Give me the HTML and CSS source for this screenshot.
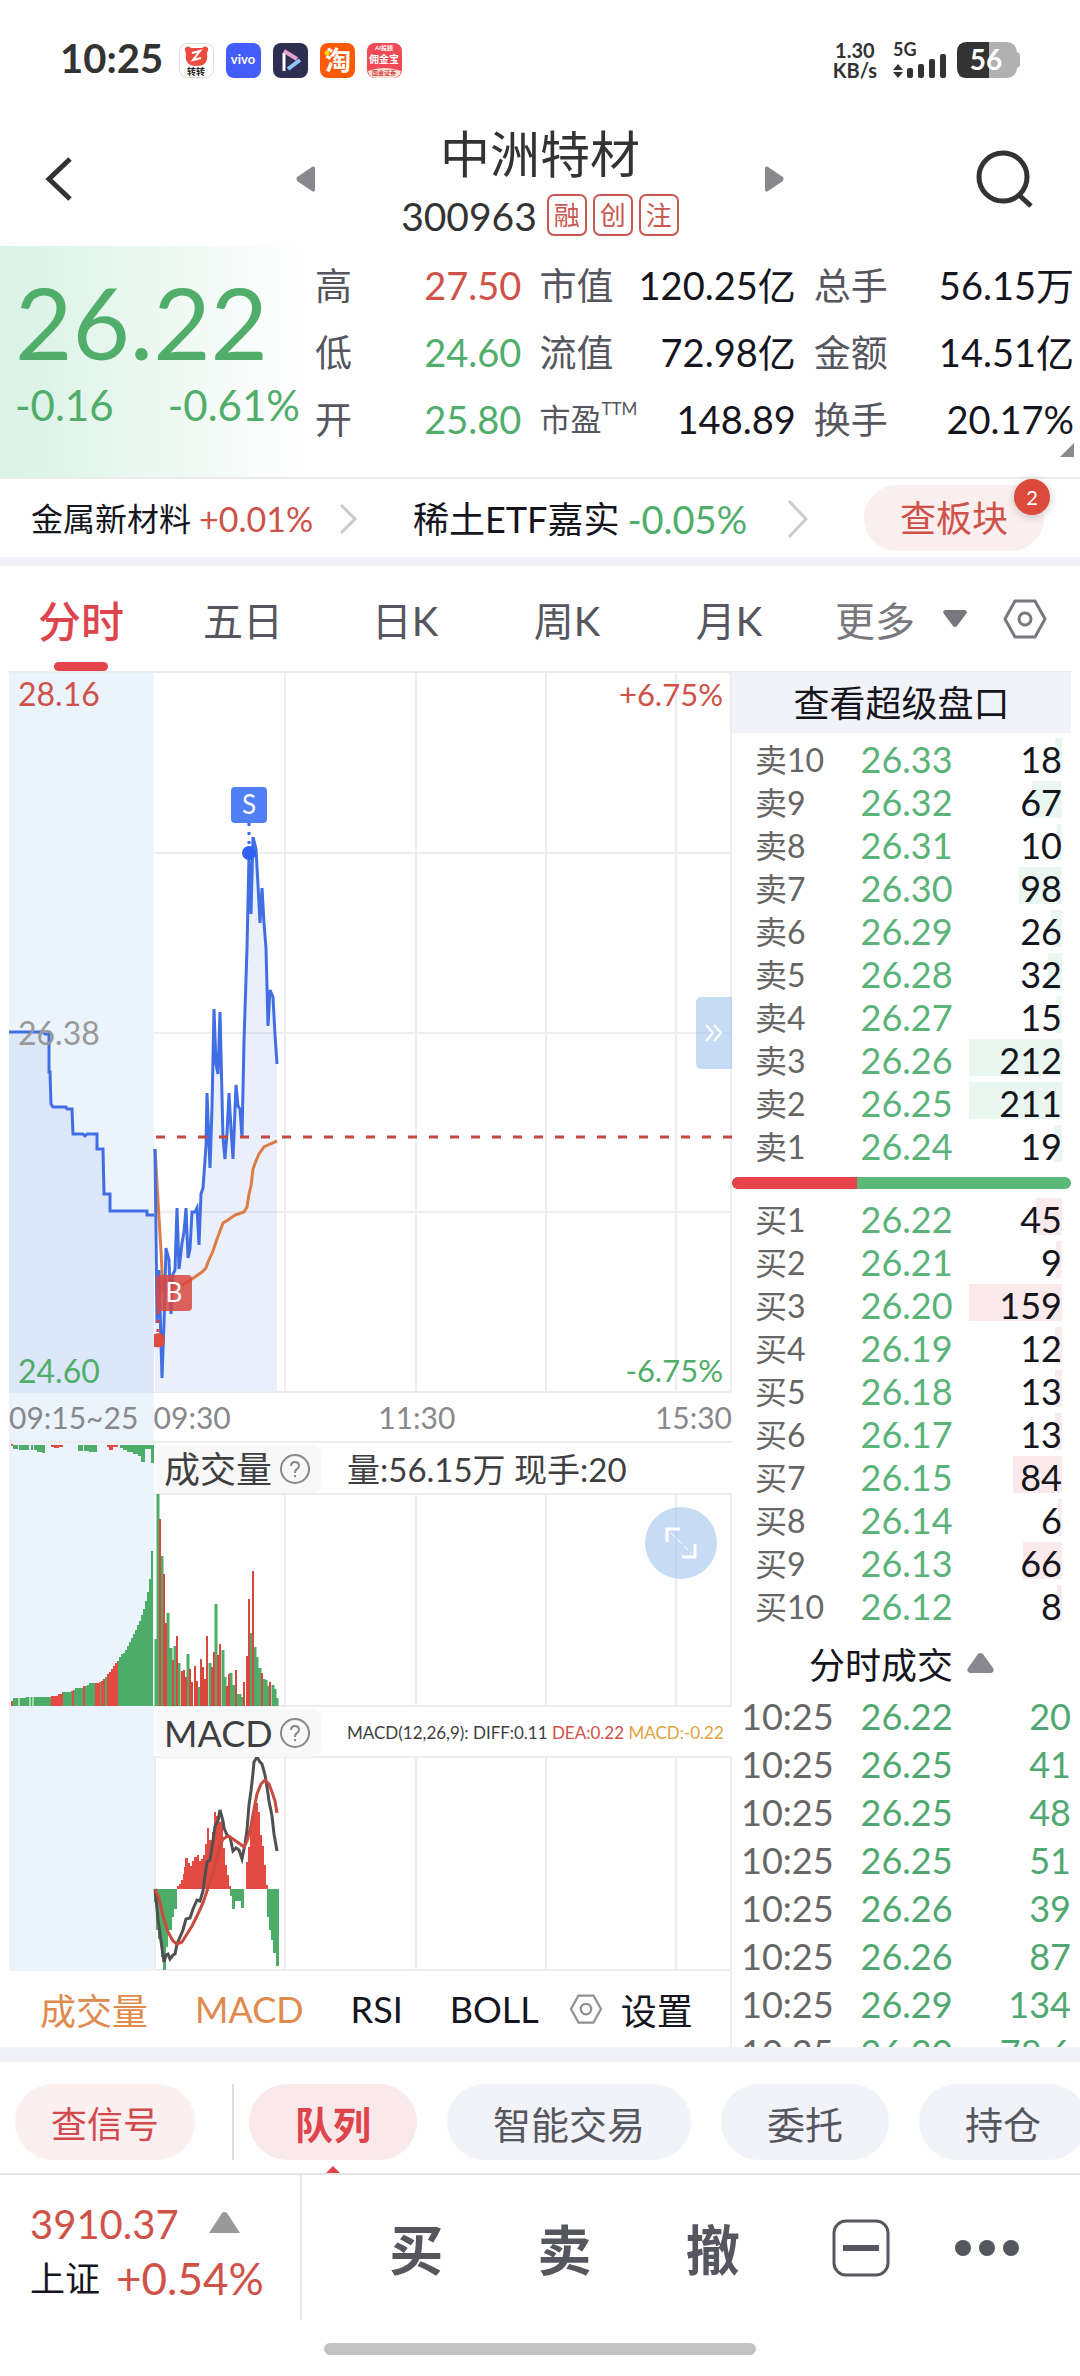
FILE: index.html
```html
<!DOCTYPE html>
<html lang="zh-CN">
<head>
    <meta charset="UTF-8">
    <meta name="viewport" content="width=device-width, initial-scale=1.0">
    <title>中洲特材 300963</title>
    <link rel="stylesheet" href="styles.css">
</head>
<body>
    <div class="status-bar">
        <span class="clock">10:25</span>
        <div class="app-icons">
            <svg width="35" height="35" viewBox="0 0 35 35">
                <rect x="0.5" y="0.5" width="34" height="34" rx="8" fill="#fff" stroke="#ddd"/>
                <path d="M6 5q3-3 6 0h11q3-3 6 0 1 2-1 5 2 13-10.500 13T7 10Q5 7 6 5z" fill="#ee4a40"/>
                <path d="M13 10l8-2-7 9 8-2" fill="none" stroke="#fff" stroke-width="2"/>
                <text x="17" y="32" class="icon-text" font-size="9" fill="#222">转转</text>
            </svg>
            <svg width="35" height="35" viewBox="0 0 35 35">
                <rect width="35" height="35" rx="8" fill="#435dfb"/>
                <text x="17" y="21" class="icon-text" font-size="13" fill="#fff">vivo</text>
            </svg>
            <svg width="35" height="35" viewBox="0 0 35 35">
                <rect width="35" height="35" rx="8" fill="#2d2e50"/>
                <path d="M11 10v18" stroke="#fff" stroke-width="3"/>
                <path d="M11 8l13 8" stroke="#e6a3d0" stroke-width="4"/>
                <path d="M27 17L15 26" stroke="#8cc8f4" stroke-width="4"/>
            </svg>
            <svg width="35" height="35" viewBox="0 0 35 35">
                <rect width="35" height="35" rx="8" fill="#fc5a04"/>
                <text x="18" y="27" class="icon-text" font-size="26" fill="#fff">淘</text>
                <circle cx="7" cy="10" r="2.500" fill="#ffd800"/>
            </svg>
            <svg width="35" height="35" viewBox="0 0 35 35">
                <rect width="35" height="35" rx="8" fill="#ef4a56"/>
                <path d="M1 28q16-6 33 0-1 7-8 7H9q-7 0-8-7z" fill="#fbe3d3"/>
                <text x="17" y="7" class="icon-text" font-size="6" fill="#fff">AI投顾</text>
                <text x="17" y="20" class="icon-text" font-size="10" fill="#fff">佣金宝</text>
                <text x="17" y="32" class="icon-text" font-size="6" fill="#d8474a">国金证券</text>
            </svg>
        </div>
        <div class="net-speed">1.30<br>KB/s</div>
        <svg class="signal" width="54" height="36" viewBox="0 0 54 36" fill="#333">
            <text x="0" y="14" font-size="18" font-weight="700">5G</text>
            <path d="M0 28l5-6 5 6zM0 30l5 6 5-6z"/>
            <rect x="14" y="26" width="6" height="10" rx="2"/>
            <rect x="25" y="22" width="6" height="14" rx="2"/>
            <rect x="36" y="17" width="6" height="19" rx="2"/>
            <rect x="47" y="12" width="6" height="24" rx="2"/>
        </svg>
        <svg width="63" height="36" viewBox="0 0 63 36">
            <rect width="60" height="36" rx="10" fill="#b1b1b1"/>
            <path d="M60 10q3 1 3 4v8q0 3-3 4z" fill="#b1b1b1"/>
            <path d="M10 0H32V36H10Q0 36 0 26V10Q0 0 10 0z" fill="#333"/>
            <text x="29" y="28" class="icon-text" font-size="28" fill="#fff">56</text>
        </svg>
    </div>

    <header class="header">
        <button class="back" aria-label="返回">
            <svg width="26" height="44" viewBox="0 0 26 44"><path d="M24 2L3 22l21 20" fill="none" stroke="#333" stroke-width="5"/></svg>
        </button>
        <div class="stock-nav">
            <button aria-label="上一只">
                <svg width="19" height="28" viewBox="0 0 19 28"><path d="M16 2Q18 0 19 3V25Q18 28 16 26L1 16Q0 14 1 12z" fill="#88888e"/></svg>
            </button>
            <div class="stock-title">
                <h1>中洲特材</h1>
                <div class="stock-code">
                    <span class="code">300963</span>
                    <span class="tag">融</span>
                    <span class="tag">创</span>
                    <span class="tag">注</span>
                </div>
            </div>
            <button aria-label="下一只">
                <svg width="19" height="28" viewBox="0 0 19 28"><path d="M3 2Q1 0 0 3V25Q1 28 3 26L18 16Q19 14 18 12z" fill="#88888e"/></svg>
            </button>
        </div>
        <button class="search" aria-label="搜索">
            <svg width="58" height="58" viewBox="0 0 58 58" fill="none" stroke="#333" stroke-width="5"><circle cx="27" cy="27" r="24"/><path d="M43 45l12 11"/></svg>
        </button>
    </header>

    <section class="quote">
        <div class="quote-price down">
            <div class="price">26.22</div>
            <div class="change"><span>-0.16</span><span>-0.61%</span></div>
        </div>
        <dl class="stats">
            <div><dt>高</dt><dd class="up">27.50</dd></div>
            <div><dt>市值</dt><dd>120.25亿</dd></div>
            <div><dt>总手</dt><dd>56.15万</dd></div>
            <div><dt>低</dt><dd class="down">24.60</dd></div>
            <div><dt>流值</dt><dd>72.98亿</dd></div>
            <div><dt>金额</dt><dd>14.51亿</dd></div>
            <div><dt>开</dt><dd class="down">25.80</dd></div>
            <div><dt class="small">市盈<sup>TTM</sup></dt><dd>148.89</dd></div>
            <div><dt>换手</dt><dd>20.17%</dd></div>
        </dl>
        <span class="expand-corner"></span>
    </section>

    <section class="sectors">
        <a href="#" class="sector small">
            <span>金属新材料</span><span class="rate up">+0.01%</span>
            <svg width="18" height="30" viewBox="0 0 18 30"><path d="M2 1l14 14L2 29" fill="none" stroke="#ccc" stroke-width="3"/></svg>
        </a>
        <a href="#" class="sector">
            <span>稀土ETF嘉实</span><span class="rate down">-0.05%</span>
            <svg width="21" height="38" viewBox="0 0 21 38"><path d="M2 1l17 18L2 37" fill="none" stroke="#ccc" stroke-width="3"/></svg>
        </a>
        <button class="board-btn">查板块<span class="badge">2</span></button>
    </section>

    <nav class="tabs">
        <button class="tab active">分时</button>
        <button class="tab">五日</button>
        <button class="tab">日K</button>
        <button class="tab">周K</button>
        <button class="tab">月K</button>
        <div class="tab-extra">
            <button class="more">更多
                <svg width="24" height="18" viewBox="0 0 24 18"><path d="M2 0H22Q25 1 23 4L14 16Q12 18 10 16L1 4Q-1 1 2 0z" fill="#77777d"/></svg>
            </button>
            <button aria-label="设置">
                <svg width="44" height="40" viewBox="0 0 44 40" fill="none" stroke="#77777d" stroke-width="3"><path d="M12 2H32L42 20 32 38H12L2 20z" stroke-linejoin="round"/><circle cx="22" cy="20" r="6"/></svg>
            </button>
        </div>
    </nav>

    <main class="market">
        <div class="chart-col">
            <div class="charts">
                <!-- price -->
                <div class="panel">
                    <svg class="chart" viewBox="0 0 723 722">
                        <path class="grid" d="M0 1H723M145 182H722M145 362H722M145 541H722M145 721H722M276 0V721M407 0V721M537 0V721M667 0V721M722 0V721"/>
                        <path fill="#dce8f9" d="M0 361H36V363H40V401H41L42 433 44 436H57V438H63L64 463H88V478H94L95 523H101V540H138V544H145V722H0z"/>
                        <path class="blue-line" d="M0 361H34L36 363H40V401H41L42 433 44 436H57L58 438H63L64 463H74L76 465 78 463H88V478H94L95 523H101V540H138V544H145"/>
                        <path fill="#3b6ff0" fill-opacity="0.100" d="M146 478L148 652 150 599 153 707 155 652 157 577 160 589 162 643 164 603 166 599 168 537 170 598 173 572 175 561 177 537 179 587 181 578 183 541 186 541 188 537 190 574 192 523 194 517 197 475 198 422 201 497 203 437 205 338 207 393 209 403 211 341 214 467 216 488 218 462 220 422 222 458 224 488 227 414 229 435 231 438 233 467 235 370 238 277 240 184 242 243 244 166 247 178 249 214 251 252 253 217 255 252 257 277 259 355 261 319 264 326 266 364 268 393V720H146z"/>
                        <path fill="none" stroke="#dc7c45" stroke-width="3" d="M146 478L149 530 152 580 154 620 173 614 183 608 193 601 197 597 199 591 204 580 208 568 214 552 219 549 226 544 235 541 238 536 240 523 242 515 244 498 247 490 250 483 255 476 261 473 268 470"/>
                        <path class="blue-line" d="M146 478L148 652 150 599 153 707 155 652 157 577 160 589 162 643 164 603 166 599 168 537 170 598 173 572 175 561 177 537 179 587 181 578 183 541 186 541 188 537 190 574 192 523 194 517 197 475 198 422 201 497 203 437 205 338 207 393 209 403 211 341 214 467 216 488 218 462 220 422 222 458 224 488 227 414 229 435 231 438 233 467 235 370 238 277 240 184 242 243 244 166 247 178 249 214 251 252 253 217 255 252 257 277 259 355 261 319 264 326 266 364 268 393"/>
                        <path stroke="#c5483f" stroke-width="3" stroke-dasharray="9 12" d="M147 466H723"/>
                        <path stroke="#3d6be8" stroke-width="3" stroke-dasharray="3 6" d="M240 152V182"/>
                        <circle cx="240" cy="182" r="7" fill="#2f62f2"/>
                        <rect x="222" y="116" width="36" height="36" rx="4" fill="#5080f5"/>
                        <text class="mark" x="240" y="143">S</text>
                        <path stroke="#dc4a40" stroke-width="3" stroke-dasharray="3 6" d="M149 640V666"/>
                        <path fill="#dc4a40" d="M145 663Q156 660 156 669T145 676z"/>
                        <rect x="147" y="604" width="36" height="36" rx="4" fill="#d9463e" fill-opacity="0.850"/>
                        <text class="mark" x="165" y="631">B</text>
                        <text x="9" y="35" class="up-label">28.16</text>
                        <text x="9" y="374" class="mid-label">26.38</text>
                        <text x="9" y="712" class="down-label">24.60</text>
                        <text x="714" y="35" class="up-label pct">+6.75%</text>
                        <text x="714" y="711" class="down-label pct">-6.75%</text>
                    </svg>
                    <button class="collapse" aria-label="收起">
                        <svg width="20" height="18" viewBox="0 0 20 18"><path d="M2 1l7 8-7 8M10 1l7 8-7 8" fill="none" stroke="#fff" stroke-width="2"/></svg>
                    </button>
                </div>
                <div class="time-axis">
                    <span>09:15~25</span>
                    <span>09:30</span>
                    <span>11:30</span>
                    <span>15:30</span>
                </div>

                <!-- volume -->
                <div class="panel">
                    <svg class="chart" viewBox="0 0 723 264">
                        <defs>
                            <clipPath id="rise"><path d="M2 0h2v264h-2zM42 0h12v264h-12zM63 0h2v264h-2zM74 0h2v264h-2zM86 0h5v264h-5zM92 0h4v264h-4zM98 0h11v264h-11z"/></clipPath>
                        </defs>
                        <path class="grid" d="M145 51H722M145 263H722M276 51V263M407 51V263M537 51V263M667 51V263M722 51V263"/>
                        <path class="fall" d="M4 2H9V6H4zM10 2H20V7H10zM22 2H24V7H22zM25 2H36V10H33V9H28V7H25zM69 2H74V8H69zM75 2H88V9H80V8H75zM111 2H145V20H142V6H136V19H132V13H129V11H124V9H118V7H114V5H111z"/>
                        <path class="rise" d="M2 1H4V3H2zM42 2H54V4H50V5H45V4H42zM98 2H109V4H104V7H100V4H98z"/>
                        <path class="fall" d="M2 263V258H4V255H17V254H42V253H49V251H53V249H62V248H64V247H66V245H74V243H78V242H80V240H90V239H92V238H94V236H96V234H98V231H100V229H102V226H104V223H106V220H108V218H110V214H112V211H114V210H116V207H118V203H120V199H122V195H124V191H126V187H128V182H130V178H132V172H134V166H136V158H138V149H140V136H142V108H144V263z"/>
                        <path class="rise" clip-path="url(#rise)" d="M2 263V258H4V255H17V254H42V253H49V251H53V249H62V248H64V247H66V245H74V243H78V242H80V240H90V239H92V238H94V236H96V234H98V231H100V229H102V226H104V223H106V220H108V218H110V263z"/>
                        <path stroke="#fff" d="M10 254V263M21 253V263M24 253V263"/>
                        <path class="fall-bars" d="M147 263V196M149 263V51M153 263V113M159 263V170M162 263V205M166 263V203M170 263V220M179 263V211M190 263V244M201 263V220M207 263V161M214 263V207M216 263V234M222 263V230M225 263V242M229 263V251M231 263V251M233 263V254M242 263V190M246 263V204M248 263V214M251 263V225M255 263V236M257 263V237M259 263V243M264 263V242M266 263V246M268 263V255"/>
                        <path class="rise-bars" d="M151 263V76M155 263V131M157 263V180M164 263V217M168 263V193M173 263V228M175 263V227M177 263V234M181 263V226M183 263V239M186 263V223M188 263V238M192 263V216M194 263V224M196 263V236M198 263V193M203 263V224M205 263V209M209 263V212M211 263V201M218 263V243M220 263V231M227 263V227M235 263V239M238 263V213M240 263V156M244 263V128M253 263V230M261 263V239"/>
                    </svg>
                    <div class="panel-head">
                        <button class="indicator-name">成交量
                            <svg width="30" height="30" viewBox="0 0 30 30" fill="none" stroke="#88888c" stroke-width="2"><circle cx="15" cy="15" r="14"/><path d="M11 12q0-4 4-4t4 4q0 2-2 3-2 1-2 4M15 21v2"/></svg>
                        </button>
                        <span class="volume-text">量:56.15万 现手:20</span>
                    </div>
                    <button class="fullscreen" aria-label="全屏">
                        <svg width="32" height="32" viewBox="0 0 32 32" fill="none" stroke="#fff"><path d="M2 15V2H15M30 17V30H17" stroke-width="3"/><path d="M6 6l20 20" stroke-width="1" stroke-dasharray="6 3"/></svg>
                    </button>
                </div>

                <!-- macd -->
                <div class="panel">
                    <svg class="chart" viewBox="0 0 723 264">
                        <path class="grid" d="M145 50H722M145 263H722M146 50V263M276 50V263M407 50V263M537 50V263M667 50V263M722 50V263"/>
                        <path class="rise" d="M168 182V179H170V177H172V173H174V167H175V160H176V151H179V156H181V159H183V154H185V150H188V148H190V154H192V152H194V148H196V137H198V121H200V133H203V125H205V105H207V109H210V115H212V114H214V141H216V158H218V168H220V179H222V182zM237 182V155H239V140H241V122H243V110H245V96H249V105H251V128H253V139H255V158H257V178H259V182z"/>
                        <path class="fall" d="M145 182V195H147V223H149V232H152V250H154V263H157V240H159V223H163V210H165V202H168V182zM221 182V189H223V202H226V194H232V201H235V182zM258 182V210H260V223H262V233H264V246H267V259H270V182z"/>
                        <path fill="none" stroke="#505050" stroke-width="3" d="M146 182L149 212 152 234 155 255 157 248 159 247 161 252 164 248 166 247 168 237 171 230 174 223 177 212 181 211 184 202 188 193 191 194 194 184 196 169 198 155 201 153 204 134 206 119 209 114 211 103 214 114 215 121 218 128 221 130 224 144 227 141 230 143 233 152 236 137 238 123 240 98 242 84 244 66 245 55 248 50 251 55 253 57 256 68 258 80 260 94 263 109 265 127 268 144"/>
                        <path fill="none" stroke="#c94a3f" stroke-width="3" d="M146 182L150 191 154 209 159 225 164 234 168 237 173 235 178 227 183 219 188 209 194 196 198 184 203 169 208 152 211 139 214 132 219 129 224 132 231 137 235 140 238 134 242 119 245 102 248 87 252 77 256 73 260 77 263 85 266 94 268 106"/>
                    </svg>
                    <div class="panel-head">
                        <button class="indicator-name">MACD
                            <svg width="30" height="30" viewBox="0 0 30 30" fill="none" stroke="#88888c" stroke-width="2"><circle cx="15" cy="15" r="14"/><path d="M11 12q0-4 4-4t4 4q0 2-2 3-2 1-2 4M15 21v2"/></svg>
                        </button>
                        <span class="macd-text">MACD(12,26,9): DIFF:0.11 <span class="up">DEA:0.22</span> <span class="gold">MACD:-0.22</span></span>
                    </div>
                </div>
            </div>

            <div class="indicators">
                <button class="on">成交量</button>
                <button class="on">MACD</button>
                <button>RSI</button>
                <button>BOLL</button>
                <button class="setting">
                    <svg width="34" height="30" viewBox="0 0 44 40" fill="none" stroke="#909095" stroke-width="3"><path d="M12 2H32L42 20 32 38H12L2 20z" stroke-linejoin="round"/><circle cx="22" cy="20" r="7"/></svg>
                    设置
                </button>
            </div>
        </div>

        <aside class="book">
            <button class="book-head">查看超级盘口</button>
            <table class="levels sell">
                <tr><td>卖10</td><td>26.33</td><td><span style="--fill: 8%">18</span></td></tr>
                <tr><td>卖9</td><td>26.32</td><td><span style="--fill: 32%">67</span></td></tr>
                <tr><td>卖8</td><td>26.31</td><td><span style="--fill: 5%">10</span></td></tr>
                <tr><td>卖7</td><td>26.30</td><td><span style="--fill: 46%">98</span></td></tr>
                <tr><td>卖6</td><td>26.29</td><td><span style="--fill: 12%">26</span></td></tr>
                <tr><td>卖5</td><td>26.28</td><td><span style="--fill: 15%">32</span></td></tr>
                <tr><td>卖4</td><td>26.27</td><td><span style="--fill: 7%">15</span></td></tr>
                <tr><td>卖3</td><td>26.26</td><td><span style="--fill: 100%">212</span></td></tr>
                <tr><td>卖2</td><td>26.25</td><td><span style="--fill: 100%">211</span></td></tr>
                <tr><td>卖1</td><td>26.24</td><td><span style="--fill: 9%">19</span></td></tr>
            </table>
            <div class="ratio"><span style="width: 37%"></span></div>
            <table class="levels buy">
                <tr><td>买1</td><td>26.22</td><td><span style="--fill: 28%">45</span></td></tr>
                <tr><td>买2</td><td>26.21</td><td><span style="--fill: 6%">9</span></td></tr>
                <tr><td>买3</td><td>26.20</td><td><span style="--fill: 100%">159</span></td></tr>
                <tr><td>买4</td><td>26.19</td><td><span style="--fill: 8%">12</span></td></tr>
                <tr><td>买5</td><td>26.18</td><td><span style="--fill: 8%">13</span></td></tr>
                <tr><td>买6</td><td>26.17</td><td><span style="--fill: 8%">13</span></td></tr>
                <tr><td>买7</td><td>26.15</td><td><span style="--fill: 53%">84</span></td></tr>
                <tr><td>买8</td><td>26.14</td><td><span style="--fill: 4%">6</span></td></tr>
                <tr><td>买9</td><td>26.13</td><td><span style="--fill: 42%">66</span></td></tr>
                <tr><td>买10</td><td>26.12</td><td><span style="--fill: 5%">8</span></td></tr>
            </table>
            <button class="ticks-head">分时成交
                <svg width="27" height="20" viewBox="0 0 27 20"><path d="M11 1Q13 -1 16 1L26 15Q28 19 24 20H3Q-1 19 1 15z" fill="#88888e"/></svg>
            </button>
            <div class="ticks-list">
                <table class="ticks">
                    <tr><td>10:25</td><td>26.22</td><td>20</td></tr>
                    <tr><td>10:25</td><td>26.25</td><td>41</td></tr>
                    <tr><td>10:25</td><td>26.25</td><td>48</td></tr>
                    <tr><td>10:25</td><td>26.25</td><td>51</td></tr>
                    <tr><td>10:25</td><td>26.26</td><td>39</td></tr>
                    <tr><td>10:25</td><td>26.26</td><td>87</td></tr>
                    <tr><td>10:25</td><td>26.29</td><td>134</td></tr>
                    <tr><td>10:25</td><td>26.30</td><td>78.6</td></tr>
                </table>
            </div>
        </aside>
    </main>

    <nav class="chips">
        <button class="chip signal-chip">查信号</button>
        <span class="chip-divider"></span>
        <button class="chip active">队列</button>
        <button class="chip">智能交易</button>
        <button class="chip">委托</button>
        <button class="chip">持仓</button>
    </nav>

    <footer class="trade-bar">
        <div class="index">
            <div class="index-row up"><span>3910.37</span>
                <svg width="31" height="21" viewBox="0 0 31 21"><path d="M13 1Q15 -1 18 1L31 21H0z" fill="#999"/></svg>
            </div>
            <div class="index-row"><span class="index-name">上证</span><span class="index-rate up">+0.54%</span></div>
        </div>
        <div class="actions">
            <button>买</button>
            <button>卖</button>
            <button>撤</button>
            <button aria-label="持仓">
                <svg width="58" height="58" viewBox="0 0 58 58" fill="none" stroke="#55565e"><rect x="2" y="2" width="54" height="54" rx="12" stroke-width="3"/><path d="M11 29H47" stroke-width="6"/></svg>
            </button>
            <button aria-label="更多">
                <svg width="64" height="16" viewBox="0 0 64 16" fill="#55565e"><circle cx="8" cy="8" r="8"/><circle cx="32" cy="8" r="8"/><circle cx="56" cy="8" r="8"/></svg>
            </button>
        </div>
    </footer>
    <div class="home-bar"></div>
</body>
</html>
```
FILE: styles.css
```css
* {
    box-sizing: border-box;
}
body {
    margin: 0;
    background: #fefefe;
    color: #15151d;
    font-family: Lato, "Noto Sans CJK SC", sans-serif;
    font-size: 38px;
}
button {
    border: none;
    background: none;
    padding: 0;
    margin: 0;
    font: inherit;
    color: inherit;
    cursor: pointer;
}
a {
    color: inherit;
    text-decoration: none;
}
svg {
    display: block;
    flex: none;
    overflow: visible;
}
.up { color: #cf5249; }
.down { color: #50ad6a; }
.gold { color: #e0a33e; }

/* status bar */
.status-bar {
    display: flex;
    align-items: center;
    height: 110px;
    padding: 10px 60px 0;
    color: #333;
}
.clock {
    font-size: 40px;
    font-weight: 700;
    line-height: 44px;
    padding-bottom: 4px;
}
.app-icons {
    display: flex;
    gap: 12px;
    margin-left: 16px;
}
.icon-text {
    text-anchor: middle;
    font-weight: 700;
}
.net-speed {
    margin-left: auto;
    font-size: 20px;
    font-weight: 700;
    line-height: 20px;
    text-align: center;
}
.signal {
    margin: 0 10px 0 16px;
}

/* header */
.header {
    display: grid;
    grid-template-columns: 1fr 488px 1fr;
    align-items: center;
    height: 136px;
    padding: 2px 46px 0;
    color: #333;
}
.back {
    justify-self: start;
}
.search {
    justify-self: end;
}
.stock-nav {
    display: flex;
    justify-content: space-between;
    align-items: center;
}
.stock-title {
    text-align: center;
}
h1 {
    margin: 0;
    font-size: 50px;
    font-weight: 400;
    line-height: 68px;
}
.stock-code {
    display: flex;
    gap: 6px;
    margin-top: 6px;
    font-size: 39px;
    line-height: 44px;
}
.code {
    margin-right: 4px;
}
.tag {
    width: 40px;
    height: 42px;
    border: 2px solid #c9574f;
    border-radius: 7px;
    color: #c9574f;
    font-size: 26px;
    line-height: 38px;
}

/* quote */
.quote {
    position: relative;
    display: flex;
    height: 231px;
}
.quote-price {
    flex: none;
    width: 300px;
    padding: 24px 0 0 15px;
    background: linear-gradient(to right, #d9f2e5, #fefefe);
}
.price {
    font-size: 99px;
    line-height: 104px;
}
.change {
    display: flex;
    justify-content: space-between;
    margin-top: 6px;
    font-size: 42px;
    line-height: 50px;
}
.stats {
    flex: 1;
    display: grid;
    grid-template-columns: 207fr 257fr 261fr;
    grid-auto-rows: 67px;
    column-gap: 18px;
    margin: 0;
    padding: 6px 6px 0 15px;
    line-height: 67px;
}
.stats div {
    display: flex;
    justify-content: space-between;
}
.stats dt {
    color: #55565e;
    font-size: 37px;
}
.stats dt.small {
    font-size: 31px;
}
.stats sup {
    font-size: 17px;
    line-height: 0;
    vertical-align: 16px;
}
.stats dd {
    margin: 0;
    font-size: 38px;
}
.expand-corner {
    position: absolute;
    right: 6px;
    bottom: 20px;
    border: 7px solid #88888e;
    border-top-color: transparent;
    border-left-color: transparent;
}

/* sectors */
.sectors {
    display: flex;
    justify-content: space-between;
    align-items: center;
    height: 80px;
    padding: 0 36px 0 31px;
    border-top: 2px solid #ececec;
}
.sector {
    display: flex;
    align-items: center;
    gap: 8px;
    padding-top: 2px;
    font-size: 36px;
    line-height: 48px;
}
.sector .rate {
    font-size: 38px;
}
.sector svg {
    margin-left: 32px;
}
.sector.small {
    font-size: 32px;
}
.sector.small .rate {
    font-size: 34px;
}
.sector.small svg {
    margin-left: 18px;
}
.board-btn {
    position: relative;
    width: 180px;
    height: 66px;
    border-radius: 33px;
    background: #fbeeee;
    color: #cf5249;
    font-size: 36px;
    line-height: 66px;
}
.badge {
    position: absolute;
    top: -6px;
    right: -6px;
    width: 36px;
    height: 36px;
    border-radius: 18px;
    background: #dc4a3c;
    box-shadow: 0 2px 8px rgba(0,0,0,0.2);
    color: #fff;
    font-size: 20px;
    line-height: 36px;
}

/* period tabs */
.tabs {
    display: flex;
    height: 114px;
    border-top: 9px solid #f2f3f8;
    color: #55565e;
    font-size: 40px;
}
.tab {
    position: relative;
    width: 15%;
}
.tab.active {
    color: #dd444c;
    font-size: 43px;
    font-weight: 500;
}
.tab.active::after {
    content: "";
    position: absolute;
    bottom: 0;
    left: 54px;
    width: 54px;
    height: 9px;
    border-radius: 5px;
    background: #e3434a;
}
.tab-extra {
    flex: 1;
    display: flex;
    justify-content: space-between;
    align-items: center;
    padding: 0 33px 0 25px;
}
.more {
    display: flex;
    align-items: center;
    gap: 28px;
    color: #77777d;
}

/* charts + order book */
.market {
    display: grid;
    grid-template-columns: 1fr 339px;
    padding: 0 9px;
    border-bottom: 15px solid #f2f3f8;
}
.charts {
    background: linear-gradient(to right, #ebf3fd 20%, transparent 20%);
}
.panel {
    position: relative;
}
.chart {
    width: 100%;
    height: auto;
}
.grid {
    fill: none;
    stroke: #ededed;
    stroke-width: 2;
}
.blue-line {
    fill: none;
    stroke: #416fe3;
    stroke-width: 3;
}
.rise { fill: #e34a41; }
.fall { fill: #4eac69; }
.rise-bars {
    stroke: #d9483f;
    stroke-width: 2;
}
.fall-bars {
    stroke: #4eac69;
    stroke-width: 3;
}
.mark {
    fill: #fff;
    font-size: 26px;
    text-anchor: middle;
}
.up-label, .mid-label, .down-label {
    font-size: 32px;
    fill: #cf5249;
}
.mid-label { fill: #999; }
.down-label { fill: #50ad6a; }
.pct {
    font-size: 31px;
    text-anchor: end;
}
.collapse {
    position: absolute;
    right: 0;
    top: 326px;
    display: flex;
    align-items: center;
    justify-content: center;
    width: 36px;
    height: 72px;
    border-radius: 5px 0 0 5px;
    background: rgba(160,196,236,0.6);
}
.time-axis {
    display: grid;
    grid-template-columns: 20% 1fr 1fr 1fr;
    height: 50px;
    border-bottom: 2px solid #ededed;
    color: #88888c;
    font-size: 30px;
    line-height: 48px;
}
.time-axis span:nth-child(3) {
    text-align: center;
    padding-right: 52px;
}
.time-axis span:nth-child(4) {
    text-align: right;
}
.panel-head {
    position: absolute;
    top: 2px;
    left: 147px;
    right: 0;
    display: flex;
    align-items: center;
    gap: 26px;
    color: #3f3f42;
}
.indicator-name {
    flex: none;
    display: flex;
    align-items: center;
    justify-content: space-between;
    width: 165px;
    height: 48px;
    padding: 0 11px 0 8px;
    border-radius: 8px;
    background: #f8f8f8;
    font-size: 36px;
    line-height: 48px;
}
.volume-text {
    font-size: 33px;
    line-height: 48px;
}
.macd-text {
    font-size: 17px;
    line-height: 48px;
    white-space: nowrap;
}
.fullscreen {
    position: absolute;
    top: 64px;
    right: 15px;
    display: flex;
    align-items: center;
    justify-content: center;
    width: 72px;
    height: 72px;
    border-radius: 36px;
    background: rgba(160,196,236,0.6);
}
.indicators {
    display: flex;
    gap: 47px;
    height: 76px;
    padding-left: 31px;
    border-right: 2px solid #ededed;
    font-size: 36px;
}
.indicators .on {
    color: #e08a4d;
}
.setting {
    display: flex;
    align-items: center;
    gap: 18px;
    margin-left: -17px;
}
.book {
    border-top: 1px solid #ededed;
}
.book-head {
    display: block;
    width: 100%;
    height: 61px;
    margin-bottom: 5px;
    background: #f2f3f8;
    font-size: 36px;
    line-height: 62px;
}
table {
    width: 100%;
    border-collapse: collapse;
    table-layout: fixed;
    font-size: 36px;
}
td {
    padding: 0;
    text-align: center;
    color: #5bb37a;
}
td:first-child {
    width: 35%;
    text-align: left;
    color: #666;
}
td:last-child {
    width: 32%;
    text-align: right;
}
.levels td {
    height: 43px;
    line-height: 43px;
}
.levels td:first-child {
    padding-left: 23px;
    font-size: 32px;
}
.levels td:last-child {
    padding-right: 9px;
    color: #15151d;
}
.levels span {
    display: block;
    width: 93px;
    height: 37px;
    margin: 0 0 6px auto;
    background: linear-gradient(#eaf6f0, #eaf6f0) right / var(--fill) 100% no-repeat;
    line-height: 43px;
}
.buy span {
    background-image: linear-gradient(#fbeaeb, #fbeaeb);
}
.ratio {
    height: 12px;
    margin: 9px 0;
    border-radius: 6px;
    background: #5bb878;
    overflow: hidden;
}
.ratio span {
    display: block;
    height: 100%;
    background: #e6444a;
}
.ticks-head {
    display: flex;
    align-items: center;
    justify-content: center;
    gap: 14px;
    width: 100%;
    height: 64px;
    padding-top: 6px;
    font-size: 36px;
}
.ticks-list {
    height: 355px;
    overflow: hidden;
}
.ticks td {
    height: 48px;
    line-height: 48px;
    color: #50a870;
}
.ticks td:first-child {
    padding-left: 9px;
    color: #666;
}

/* bottom */
.chips {
    display: flex;
    height: 111px;
    padding: 22px 0 0 15px;
    overflow: hidden;
    color: #55565e;
}
.chip {
    flex: none;
    position: relative;
    height: 76px;
    margin-right: 30px;
    padding: 0 46px;
    border-radius: 38px;
    background: #f2f3f8;
}
.signal-chip {
    margin-right: 37px;
    padding: 0 36px;
    background: #fcefef;
    color: #d2484c;
    font-size: 36px;
}
.chip.active {
    background: #fae9ea;
    color: #dd444c;
    font-weight: 700;
}
.chip.active::after {
    content: "";
    position: absolute;
    left: 50%;
    bottom: -13px;
    margin-left: -7px;
    border: 7px solid transparent;
    border-top: none;
    border-bottom-color: #dd444c;
}
.chip-divider {
    flex: none;
    width: 2px;
    height: 76px;
    margin-right: 15px;
    background: #ddd;
}
.trade-bar {
    display: flex;
    height: 147px;
    border-top: 2px solid #e4e4e4;
}
.index {
    flex: none;
    width: 302px;
    padding: 22px 0 0 30px;
    border-right: 2px solid #e8e8e8;
    font-size: 40px;
    line-height: 54px;
}
.index-row {
    display: flex;
    align-items: center;
}
.index-row svg {
    margin: 0 0 4px 30px;
}
.index-name {
    margin-right: 16px;
    font-size: 35px;
}
.index-rate {
    font-size: 44px;
}
.actions {
    flex: 1;
    display: grid;
    grid-template-columns: repeat(4, 1fr) 104px;
    align-items: center;
    justify-items: center;
    padding: 0 41px 0 40px;
    color: #55565e;
    font-size: 54px;
    font-weight: 700;
}
.home-bar {
    width: 40%;
    height: 12px;
    margin: 23px auto 21px;
    border-radius: 6px;
    background: #c2c2c2;
}
```
